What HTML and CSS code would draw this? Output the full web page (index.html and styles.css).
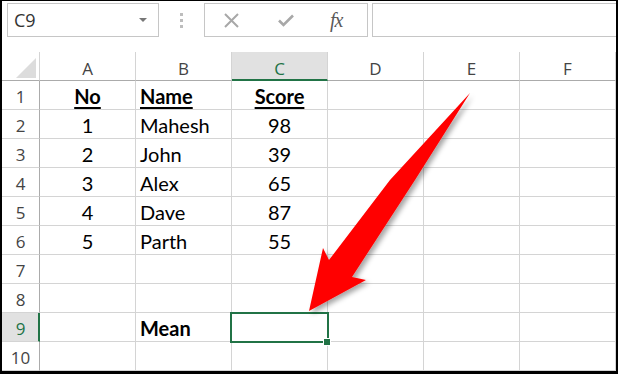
FILE: index.html
```html
<!DOCTYPE html>
<html>
<head>
  <title>Hoja de cálculo</title>
  <link rel="stylesheet" href="styles.css">
</head>
<body>
<div class="frame">

  <!-- barra de formulas -->
  <div class="toolbar">
    <div class="namebox"><span>C9</span><span class="caret"></span></div>
    <div class="grip"><i></i><i></i><i></i></div>
    <div class="fxbox">
      <svg class="ico-x" width="15" height="15" viewBox="0 0 15 15"><path d="M1 1 L14 14 M14 1 L1 14" stroke="#a8a8a8" stroke-width="2" fill="none"/></svg>
      <svg class="ico-ok" width="16" height="13" viewBox="0 0 16 13"><path d="M1 6.5 L5.5 11 L15 1.5" stroke="#a8a8a8" stroke-width="2.6" fill="none"/></svg>
      <span class="fx">fx</span>
    </div>
    <div class="formula"></div>
  </div>

  <!-- hoja -->
  <div class="sheet">
    <div class="corner"><span class="tri"></span></div>
    <div class="colh">A</div>
    <div class="colh">B</div>
    <div class="colh active">C</div>
    <div class="colh">D</div>
    <div class="colh">E</div>
    <div class="colh">F</div>

    <div class="rowh">1</div>
    <div class="cell c"><b class="u">No</b></div>
    <div class="cell l"><b class="u">Name</b></div>
    <div class="cell c"><b class="u">Score</b></div>
    <div class="cell"></div><div class="cell"></div><div class="cell"></div>

    <div class="rowh">2</div>
    <div class="cell c">1</div>
    <div class="cell l">Mahesh</div>
    <div class="cell c">98</div>
    <div class="cell"></div><div class="cell"></div><div class="cell"></div>

    <div class="rowh">3</div>
    <div class="cell c">2</div>
    <div class="cell l">John</div>
    <div class="cell c">39</div>
    <div class="cell"></div><div class="cell"></div><div class="cell"></div>

    <div class="rowh">4</div>
    <div class="cell c">3</div>
    <div class="cell l">Alex</div>
    <div class="cell c">65</div>
    <div class="cell"></div><div class="cell"></div><div class="cell"></div>

    <div class="rowh">5</div>
    <div class="cell c">4</div>
    <div class="cell l">Dave</div>
    <div class="cell c">87</div>
    <div class="cell"></div><div class="cell"></div><div class="cell"></div>

    <div class="rowh">6</div>
    <div class="cell c">5</div>
    <div class="cell l">Parth</div>
    <div class="cell c">55</div>
    <div class="cell"></div><div class="cell"></div><div class="cell"></div>

    <div class="rowh">7</div>
    <div class="cell"></div><div class="cell"></div><div class="cell"></div>
    <div class="cell"></div><div class="cell"></div><div class="cell"></div>

    <div class="rowh">8</div>
    <div class="cell"></div><div class="cell"></div><div class="cell"></div>
    <div class="cell"></div><div class="cell"></div><div class="cell"></div>

    <div class="rowh active">9</div>
    <div class="cell"></div>
    <div class="cell l"><b>Mean</b></div>
    <div class="cell sel"></div>
    <div class="cell"></div><div class="cell"></div><div class="cell"></div>

    <div class="rowh">10</div>
    <div class="cell"></div><div class="cell"></div><div class="cell"></div>
    <div class="cell"></div><div class="cell"></div><div class="cell"></div>
  </div>

  <!-- flecha roja -->
  <svg class="arrow" width="618" height="374" viewBox="0 0 618 374">
    <defs>
      <filter id="sombra" x="-20%" y="-20%" width="140%" height="140%">
        <feDropShadow dx="3" dy="3" stdDeviation="2.5" flood-color="#000" flood-opacity="0.35"/>
      </filter>
    </defs>
    <path d="M470 93 L415 180 L352 277 L366 280 L309 311 L323 248 L329 260 L390 180 Z" fill="#ff0000" filter="url(#sombra)"/>
  </svg>
</div>
</body>
</html>
```

FILE: styles.css
```css
body {
  margin: 0;
  background: #fff;
}

.frame {
  position: relative;
  width: 618px;
  height: 374px;
  box-sizing: border-box;
  border-style: solid;
  border-color: #000;
  border-width: 1px 2px 3px 2px;
  background: #fff;
  overflow: hidden;
  font-family: "Open Sans", sans-serif;
}

/* barra de formulas */
.toolbar {
  height: 51px;
  display: flex;
  align-items: flex-start;
  padding: 2px 0 0 5px;
  box-sizing: border-box;
}

.namebox {
  width: 152px;
  height: 34px;
  box-sizing: border-box;
  border: 1px solid #c6c6c6;
  display: flex;
  align-items: center;
  justify-content: space-between;
  padding: 0 11px 0 6px;
  font-size: 18px;
  color: #333;
}

.caret {
  width: 0;
  height: 0;
  border-left: 4px solid transparent;
  border-right: 4px solid transparent;
  border-top: 4px solid #777;
}

.grip {
  width: 45px;
  height: 34px;
  display: flex;
  flex-direction: column;
  align-items: center;
  justify-content: center;
  gap: 3px;
}

.grip i {
  display: block;
  width: 3px;
  height: 3px;
  background: #bdbdbd;
}

.fxbox {
  width: 164px;
  height: 34px;
  box-sizing: border-box;
  border: 1px solid #c6c6c6;
  display: flex;
  align-items: center;
  padding-left: 19px;
}

.ico-x {
  margin-right: 39px;
}

.ico-ok {
  margin-right: 36px;
}

.fx {
  font-family: "Liberation Serif", serif;
  font-style: italic;
  font-size: 20px;
  color: #5a5a5a;
  letter-spacing: -1px;
}

.formula {
  flex: 1;
  height: 34px;
  box-sizing: border-box;
  margin-left: 4px;
  border: 1px solid #c6c6c6;
  border-right: none;
}

/* hoja */
.sheet {
  display: grid;
  grid-template-columns: 38px repeat(6, 96px);
  grid-auto-rows: 29px;
}

.corner,
.colh,
.rowh,
.cell {
  box-sizing: border-box;
  border-right: 1px solid #d4d4d4;
  border-bottom: 1px solid #d4d4d4;
}

.corner {
  border-bottom-color: #ababab;
  border-right-color: #d4d4d4;
  position: relative;
}

.tri {
  position: absolute;
  right: 3px;
  bottom: 2px;
  width: 0;
  height: 0;
  border-left: 20px solid transparent;
  border-bottom: 20px solid #dcdcdc;
}

.colh {
  border-bottom-color: #ababab;
  display: flex;
  justify-content: center;
  align-items: center;
  padding-top: 4px;
  font-size: 17px;
  color: #444;
}

.colh.active {
  background: #e1e1e1;
  border-bottom: 2px solid #217346;
  color: #217346;
  padding-top: 5px;
}

.rowh {
  border-right-color: #ababab;
  display: flex;
  justify-content: center;
  align-items: center;
  padding-top: 3px;
  font-size: 17px;
  color: #444;
}

.rowh.active {
  background: #e1e1e1;
  border-right: 2px solid #217346;
  color: #217346;
  padding-left: 1px;
}

.cell {
  display: flex;
  align-items: center;
  padding-top: 2px;
  font-family: Lato, "Liberation Sans", sans-serif;
  font-size: 20px;
  color: #000;
}

.cell.c {
  justify-content: center;
}

.cell.l {
  padding-left: 4px;
}

.cell b {
  font-weight: bold;
}

.cell b.u {
  text-decoration: underline;
  text-decoration-thickness: 2px;
  text-underline-offset: 3px;
}

.sel {
  position: relative;
}

.sel::before {
  content: "";
  position: absolute;
  left: -2px;
  top: -1px;
  right: -2px;
  bottom: -2px;
  border: 2px solid #217346;
}

.sel::after {
  content: "";
  position: absolute;
  right: -4px;
  bottom: -5px;
  width: 6px;
  height: 6px;
  background: #217346;
  border: 1px solid #fff;
}

.arrow {
  position: absolute;
  left: -2px;
  top: -1px;
  pointer-events: none;
}
```
